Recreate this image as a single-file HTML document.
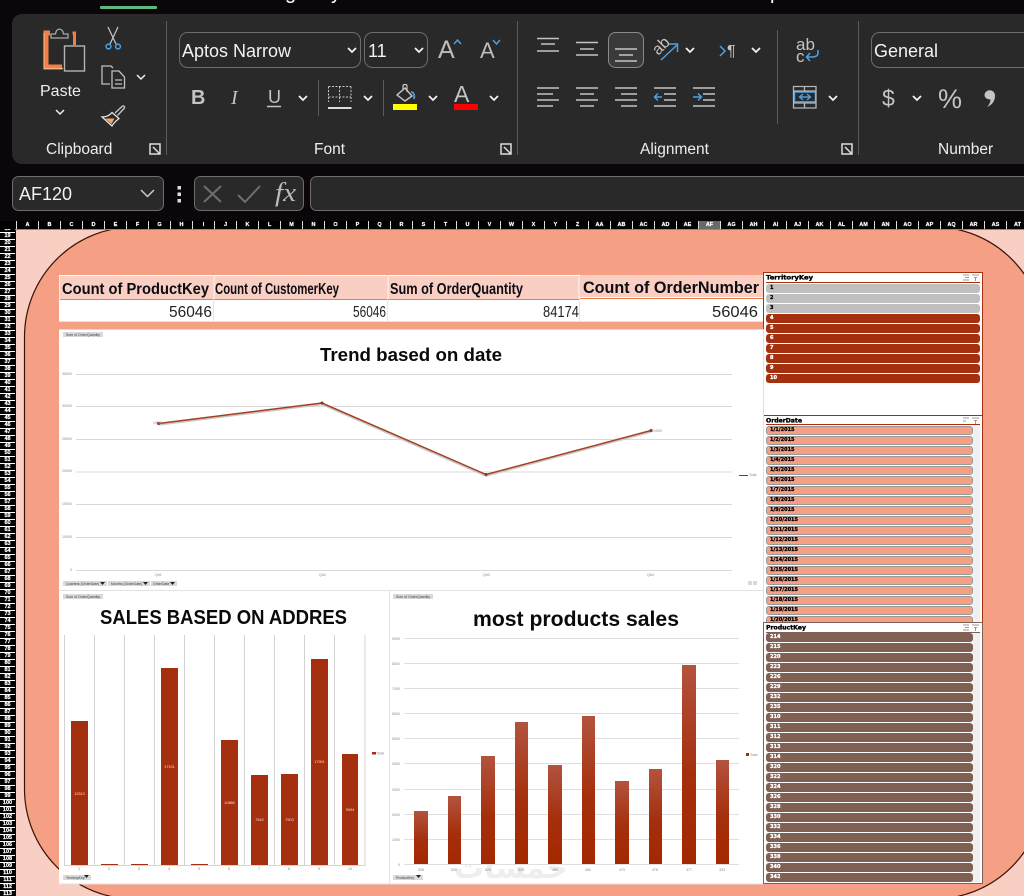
<!DOCTYPE html>
<html><head><meta charset="utf-8"><style>
*{box-sizing:border-box}
html,body{margin:0;padding:0;background:#0a060a}
#p{position:relative;width:1024px;height:896px;overflow:hidden;background:#0a060a;font-family:"Liberation Sans",sans-serif}
#s{position:absolute;left:0;top:0}
.sl{position:absolute;font:bold 5px/9px "DejaVu Sans",sans-serif;-webkit-text-stroke:.3px currentColor}
.sl div{height:9px;margin-bottom:1px;border-radius:3px;padding-left:4px;overflow:hidden}
.a div{background:#a5300f;color:#fff}
.g div{background:#bfbfbf;color:#000}
.o div{background:#f59f85;color:#000;border:1px solid #999;line-height:7px;padding-left:3px}
.b div{background:#7f6053;color:#fff}
#rows{position:absolute;left:0;top:226px;width:15px;height:670px;clip-path:inset(3px 0 0 0);background:repeating-linear-gradient(#000 0 6px,#fff 6px 7px);color:#fff;font:bold 5.5px/7px "Liberation Sans",sans-serif;text-align:center;white-space:pre;-webkit-text-stroke:.2px #fff}
#cols{position:absolute;left:16px;top:221px;height:8px;display:flex;color:#fff;font:bold 5.5px/8px "Liberation Sans",sans-serif;-webkit-text-stroke:.2px #fff}
#cols span{width:22px;text-align:center;border-left:1px solid #ddd;flex:none}
</style></head><body><div id="p">
<svg id="s" width="1024" height="896" viewBox="0 0 1024 896" xmlns="http://www.w3.org/2000/svg" font-family="'Liberation Sans',sans-serif">
<defs><linearGradient id="bar" x1="0" y1="0" x2="0" y2="1"><stop offset="0" stop-color="#b3533f"/><stop offset=".55" stop-color="#a52f0c"/><stop offset="1" stop-color="#a32800"/></linearGradient></defs>
<!-- top -->
<rect x="100" y="6" width="57" height="3" rx="1" fill="#5fb97f"/>
<text x="285" y="-1" font-size="20" fill="#fff">g</text><text x="331" y="-1" font-size="20" fill="#fff">y</text><text x="770" y="-1" font-size="20" fill="#fff">p</text>
<rect x="12" y="14" width="1040" height="150" rx="10" fill="#292929"/>
<g stroke="#5c5c5c" stroke-width="1"><path d="M166.500 21V155M517.500 21V155M858.500 21V155M777.500 30V124M318.500 80V116M383.500 80V116"/></g>
<!-- paste -->
<path d="M50 33H46V67H62" fill="none" stroke="#f08048" stroke-width="5"/><path d="M44 33V68.500H63" fill="none" stroke="#f6b27a" stroke-width="1.200"/>
<path d="M72.500 33H74.500V45" fill="none" stroke="#f08048" stroke-width="3"/>
<path d="M51 38V34H55.500C56 27.500 63 27.500 63.500 34H68V38Z" fill="#292929" stroke="#a8a8a8" stroke-width="1.300"/>
<rect x="64.500" y="46" width="20" height="25" fill="#292929" stroke="#b5b5b5" stroke-width="1.400"/>
<text x="40" y="96" font-size="16" fill="#eee">Paste</text>
<g fill="none" stroke="#eee" stroke-width="1.500"><path d="M56 110l4 4 4-4M137 75l4 4 4-4"/></g>
<!-- scissors -->
<path d="M108 27L116 44M118 27L110 44" stroke="#c8c8c8" stroke-width="1.200" fill="none"/><circle cx="108.500" cy="46.500" r="2.400" fill="none" stroke="#4d9fe0" stroke-width="1.500"/><circle cx="118" cy="46.500" r="2.400" fill="none" stroke="#4d9fe0" stroke-width="1.500"/>
<!-- copy -->
<path d="M110 84H102V66H111L113 68" fill="none" stroke="#c0c0c0" stroke-width="1.300"/><path d="M112 71H119L124.500 77V88H112Z" fill="#292929" stroke="#c0c0c0" stroke-width="1.300"/><path d="M115 80H122M115 84H122" stroke="#c0c0c0" stroke-width="1.300"/>
<!-- painter -->
<path d="M115 113L122 106.500C123.500 105 125.500 107 124 108.500L117.500 115.500" fill="none" stroke="#c8c8c8" stroke-width="1.300"/>
<path d="M102 117C107 117 110 115 112 112.500L119 118.500C116 121 113.500 123 112 126Z" fill="#292929" stroke="#eee" stroke-width="1.200"/>
<path d="M105 118.500L114.500 118.500L111.500 124Z" fill="#f6a55e"/>
<text x="46" y="154" font-size="15.500" fill="#eee">Clipboard</text>
<text x="314" y="154" font-size="15.500" fill="#eee">Font</text>
<text x="640" y="154" font-size="15.500" fill="#eee">Alignment</text>
<text x="938" y="154" font-size="15.500" fill="#eee">Number</text>
<g fill="none" stroke="#ddd" stroke-width="1.500"><path d="M150 144H160V154H150ZM153 147L160 154M156 154H160V150"/><path d="M501 144H511V154H501ZM504 147L511 154M507 154H511V150"/><path d="M842 144H852V154H842ZM845 147L852 154M848 154H852V150"/></g>
<!-- selects -->
<g fill="#292929" stroke="#6d6d6d"><rect x="179.500" y="32.500" width="181" height="35" rx="8"/><rect x="364.500" y="32.500" width="63" height="35" rx="8"/><rect x="871.500" y="32.500" width="200" height="35" rx="8"/><rect x="608.500" y="32.500" width="35" height="35" rx="7" fill="#3a3a3a" stroke="#8a8a8a"/></g>
<text x="182" y="57" font-size="18" fill="#f2f2f2">Aptos Narrow</text><text x="368" y="57" font-size="18" fill="#f2f2f2">11</text><text x="874" y="57" font-size="18" fill="#f2f2f2">General</text>
<g fill="none" stroke="#f2f2f2" stroke-width="1.800"><path d="M348 48l4 4 4-4M415 48l4 4 4-4M299 96l4 4 4-4M364 96l4 4 4-4M429 96l4 4 4-4M490 96l4 4 4-4M686 48l4 4 4-4M752 48l4 4 4-4M829 96l4 4 4-4M913 96l4 4 4-4"/></g>
<!-- font size -->
<text x="438" y="58" font-size="25" fill="#bdbdbd">A</text><text x="480" y="58" font-size="22" fill="#bdbdbd">A</text>
<path d="M454 44l3.500-4 3.500 4M493 40l3.500 4 3.500-4" fill="none" stroke="#4d9fe0" stroke-width="1.500"/>
<text x="191" y="104" font-size="20" font-weight="bold" fill="#c4c4c4">B</text>
<text x="231" y="104" font-size="20" font-style="italic" font-family="'Liberation Serif',serif" fill="#c4c4c4">I</text>
<text x="268" y="103" font-size="18" fill="#c4c4c4">U</text><path d="M267 106.500H281" stroke="#c4c4c4" stroke-width="1.500"/>
<!-- borders -->
<path d="M328.500 86.500H351M328.500 86.500V102M351 86.500V102M339.500 86.500V102M328.500 97H351" stroke="#c8c8c8" stroke-dasharray="2 1.500" fill="none"/><path d="M328 108H351.500" stroke="#ddd" stroke-width="2"/>
<!-- fill -->
<path d="M397 95L405 88L412 96L405 101Z" fill="none" stroke="#c8c8c8" stroke-width="1.400"/><path d="M403 90V86C403 84 407 84 407 86V92" fill="none" stroke="#c8c8c8" stroke-width="1.200"/><path d="M411 92C413 92 415 94 414 99" stroke="#4d9fe0" stroke-width="1.800" fill="none"/>
<rect x="393" y="104" width="24" height="6" fill="#ff0"/>
<text x="454" y="102" font-size="23" fill="#c4c4c4">A</text><rect x="454" y="104" width="24" height="6" fill="#f00"/>
<!-- alignment -->
<g stroke="#c4c4c4" stroke-width="1.500" fill="none"><path d="M537 38.500H559M541 44H555M537 51H559M576 42.500H598M580 49H594M576 55H598M615 49H637M619 55H633M615 61H637"/>
<path d="M537 88H559M537 94H553M537 100H559M537 106H553M576 88H598M580 94H594M576 100H598M580 106H594M615 88H637M621 94H637M615 100H637M621 106H637M654 88H676M664 94H676M664 100H676M654 106H676M693 88H715M703 94H715M703 100H715M693 106H715"/></g>
<g stroke="#4d9fe0" stroke-width="1.500" fill="none"><path d="M662 97H654.500M658 93.500L654.500 97L658 100.500M693 97H701M698 93.500L701.500 97L698 100.500M661 60L677 45M669 44H677.500V52M720 46L725 51L720 56"/>
<path d="M795 91.500H816M795 102H816M800 97H810M803 94L799.500 97L803 100M807 94L810.500 97L807 100" stroke-width="1.400"/><rect x="794.500" y="92" width="21" height="10"/>
<path d="M818 50V53C818 56 815 57 812 57H807M810 53L806.500 57L810 61" stroke-width="1.600"/></g>
<path d="M793.500 86.500H816V108H793.500ZM793.500 91H816M793.500 103H816M804.500 86.500V91M804.500 103V108" fill="none" stroke="#b5b5b5" stroke-width="1.300"/>
<text x="661" y="51" text-anchor="middle" font-size="16" fill="#c4c4c4" transform="rotate(-45 661 46)">ab</text>
<text x="727" y="56" font-size="16" fill="#c4c4c4">¶</text>
<text x="796" y="50" font-size="17" fill="#c4c4c4">ab</text><text x="796" y="62" font-size="17" fill="#c4c4c4">c</text>
<text x="882" y="106" font-size="23" fill="#c4c4c4">$</text><text x="938" y="108" font-size="27" fill="#c4c4c4">%</text>
<path d="M984.500 95a5 5 0 1 1 10.500 1c0 5-3 9-8 11c2-2 3.500-5 3.500-7.500c-3 0-6-1.500-6-4.500Z" fill="#c4c4c4"/>
<!-- formula bar -->
<g fill="#292929" stroke="#6d6d6d"><rect x="12.500" y="176.500" width="151" height="34" rx="6"/><rect x="194.500" y="176.500" width="109" height="34" rx="6"/><rect x="310.500" y="176.500" width="760" height="34" rx="6"/></g>
<text x="19" y="200" font-size="18" fill="#f2f2f2">AF120</text>
<path d="M141 190l6.500 6.500 6.500-6.500" fill="none" stroke="#ccc" stroke-width="1.500"/>
<rect x="177.500" y="186" width="3.500" height="3.500" fill="#ddd"/><rect x="177.500" y="192.500" width="3.500" height="3.500" fill="#ddd"/><rect x="177.500" y="199" width="3.500" height="3.500" fill="#ddd"/>
<path d="M204 186L221 202M221 186L204 202M238 195L245 202L260 186" fill="none" stroke="#6f6f6f" stroke-width="2"/>
<text x="275" y="201" font-size="26" font-style="italic" font-family="'Liberation Serif',serif" fill="#bbb" textLength="21" lengthAdjust="spacingAndGlyphs">fx</text>
<!-- sheet -->
<rect x="16" y="229" width="1008" height="667" fill="#f9cfc3"/>
<rect x="24.500" y="227" width="1019.500" height="672" rx="110" fill="#f59f85" stroke="#3a1208" stroke-width="1.200"/>
<rect x="0" y="221" width="1024" height="8" fill="#000"/>
<rect x="0" y="229" width="1024" height="1" fill="#8a8a8a"/>
<rect x="698" y="221" width="22" height="8" fill="#6a6a6a"/>
<!-- table -->
<rect x="59" y="275" width="704" height="47" fill="#fff"/>
<rect x="59.500" y="276" width="154" height="23" fill="#f9cfc3"/><rect x="214.500" y="276" width="173" height="23" fill="#f9cfc3"/><rect x="388.500" y="276" width="190" height="23" fill="#f9cfc3"/><rect x="580" y="275" width="183" height="22" fill="#f9cfc3"/>
<path d="M60 299.500H579M580 298.500H763" stroke="#ed7d47" stroke-width="1"/>
<path d="M213.500 275V322M387.500 275V322M579.500 274V322M59 321.500H763" stroke="#e4e4e4" stroke-width="1"/>
<g font-weight="bold" fill="#0c0c12"><text x="62" y="294" font-size="16" textLength="147" lengthAdjust="spacingAndGlyphs">Count of ProductKey</text>
<text x="215" y="294" font-size="16" textLength="124" lengthAdjust="spacingAndGlyphs">Count of CustomerKey</text>
<text x="390" y="294" font-size="16" textLength="133" lengthAdjust="spacingAndGlyphs">Sum of OrderQuantity</text>
<text x="583" y="293" font-size="16.500" textLength="176" lengthAdjust="spacingAndGlyphs">Count of OrderNumber</text></g>
<g fill="#222"><text x="169" y="317" font-size="16" textLength="43" lengthAdjust="spacingAndGlyphs">56046</text><text x="353" y="317" font-size="16" textLength="33" lengthAdjust="spacingAndGlyphs">56046</text><text x="543" y="317" font-size="16" textLength="36" lengthAdjust="spacingAndGlyphs">84174</text><text x="712" y="317" font-size="16" textLength="46" lengthAdjust="spacingAndGlyphs">56046</text></g>
<!-- chart 1 -->
<rect x="59" y="329.500" width="704" height="555" fill="#fff"/>
<g stroke="#d9d9d9" stroke-width="1"><path d="M76 374.500H732M76 406.500H732M76 439.500H732M76 472H732M76 504.500H732M76 537.500H732M76 570.500H732"/></g>
<polyline points="158.500,424.500 322,404 486,475.500 651,431.500" fill="none" stroke="#c8c8c8" stroke-width="2.500"/>
<polyline points="158.500,423.500 322,403 486,474.500 651,430.500" fill="none" stroke="#a5401f" stroke-width="1.500"/>
<g fill="#7a3a28"><circle cx="158.500" cy="423.500" r="1.500"/><circle cx="322" cy="403" r="1.500"/><circle cx="486" cy="474.500" r="1.500"/><circle cx="651" cy="430.500" r="1.500"/></g>
<g font-size="3.500" fill="#888"><text x="62" y="375">35000</text><text x="62" y="407">30000</text><text x="62" y="440">25000</text><text x="62" y="472">20000</text><text x="62" y="505">15000</text><text x="62" y="538">10000</text><text x="70" y="571">0</text>
<text x="155" y="576">Qtr1</text><text x="319" y="576">Qtr2</text><text x="483" y="576">Qtr3</text><text x="647" y="576">Qtr4</text><text x="749" y="476">Total</text><text x="153" y="424">19000</text><text x="652" y="432">21000</text></g>
<path d="M739 475.500H748" stroke="#a5300f" stroke-width="1"/>
<g fill="#d9d9d9"><rect x="63" y="332" width="40" height="5"/><rect x="63" y="581" width="44" height="5"/><rect x="108" y="581" width="42" height="5"/><rect x="151" y="581" width="26" height="5"/><rect x="748" y="581" width="4" height="4"/><rect x="753" y="581" width="4" height="4"/><rect x="63" y="594" width="40" height="5"/><rect x="393" y="594" width="40" height="5"/><rect x="63" y="875" width="28" height="5"/><rect x="393" y="875" width="30" height="5"/></g>
<g font-size="3.500" fill="#444"><text x="66" y="336">Sum of OrderQuantity</text><text x="66" y="585">Quarters (OrderDate)</text><text x="111" y="585">Months (OrderDate)</text><text x="153" y="585">OrderDate</text><text x="66" y="598">Sum of OrderQuantity</text><text x="396" y="598">Sum of OrderQuantity</text><text x="66" y="879">TerritoryKey</text><text x="396" y="879">ProductKey</text></g>
<path d="M100 582h5l-2.500 3zM143 582h5l-2.500 3zM170 582h5l-2.500 3zM84 875h5l-2.500 3zM416 875h5l-2.500 3z" fill="#222"/>
<path d="M59 590.500H763M389.500 590V884M59.500 884H763" stroke="#e2e2e2" stroke-width="1"/>
<!-- title -->
<text x="320" y="361" font-size="18" font-weight="bold" fill="#0a0a0a" textLength="182" lengthAdjust="spacingAndGlyphs">Trend based on date</text>
<text x="100" y="624" font-size="20.500" font-weight="bold" fill="#0a0a0a" textLength="247" lengthAdjust="spacingAndGlyphs">SALES BASED ON ADDRES</text>
<text x="473" y="626" font-size="21" font-weight="bold" fill="#0a0a0a" textLength="206" lengthAdjust="spacingAndGlyphs">most products sales</text>
<!-- chart 2 -->
<path d="M64.500 635V865M94.500 635V865M124.500 635V865M154.500 635V865M184.500 635V865M214.500 635V865M244.500 635V865M274.500 635V865M304.500 635V865M334.500 635V865M365 635V865M64 865.500H365.500" stroke="#d4d4d4" stroke-width="1"/>
<g fill="#a5300f"><rect x="71" y="721" width="17" height="144"/><rect x="101" y="864" width="17" height="1"/><rect x="131" y="864" width="17" height="1"/><rect x="161" y="668" width="17" height="197"/><rect x="191" y="864" width="17" height="1"/><rect x="221" y="740" width="17" height="125"/><rect x="251" y="775" width="17" height="90"/><rect x="281" y="774" width="17" height="91"/><rect x="311" y="659" width="17" height="206"/><rect x="342" y="754" width="16" height="111"/><rect x="372" y="752" width="4" height="2.500"/></g>
<g font-size="3.800" fill="#f5dcd4" text-anchor="middle"><text x="79.500" y="795">12513</text><text x="169.500" y="768">17191</text><text x="229.500" y="804">10886</text><text x="259.500" y="821">7842</text><text x="289.500" y="821">7903</text><text x="319.500" y="763">17901</text><text x="350" y="811">9094</text></g>
<g font-size="3.800" fill="#888" text-anchor="middle"><text x="79" y="870">1</text><text x="109" y="870">2</text><text x="139" y="870">3</text><text x="169" y="870">4</text><text x="199" y="870">5</text><text x="229" y="870">6</text><text x="259" y="870">7</text><text x="289" y="870">8</text><text x="319" y="870">9</text><text x="350" y="870">10</text><text x="380" y="754.500">Total</text></g>
<!-- chart 3 -->
<text x="511" y="878" text-anchor="middle" font-family="'DejaVu Sans',sans-serif" font-size="30" font-weight="bold" fill="#eeeeee" direction="rtl">خمسات</text>
<path d="M404 638.500H739M404 663.500H739M404 688.500H739M404 713.500H739M404 738.500H739M404 763.500H739M404 789.500H739M404 814.500H739M404 839.500H739M404 864.500H739" stroke="#dfdfdf" stroke-width="1"/>
<g fill="url(#bar)"><rect x="414" y="811" width="14" height="53"/><rect x="448" y="796" width="13" height="68"/><rect x="481" y="756" width="14" height="108"/><rect x="515" y="722" width="13" height="142"/><rect x="548" y="765" width="14" height="99"/><rect x="582" y="716" width="13" height="148"/><rect x="615" y="781" width="14" height="83"/><rect x="649" y="769" width="13" height="95"/><rect x="682" y="665" width="14" height="199"/><rect x="716" y="760" width="13" height="104"/></g>
<rect x="746" y="753" width="3" height="3" fill="#a5300f"/>
<g font-size="3.500" fill="#888"><text x="392" y="640">9000</text><text x="392" y="665">8000</text><text x="392" y="690">7000</text><text x="392" y="715">6000</text><text x="392" y="740">5000</text><text x="392" y="765">4000</text><text x="392" y="791">3000</text><text x="392" y="816">2000</text><text x="392" y="841">1000</text><text x="398" y="866">0</text><text x="750" y="756">Total</text></g>
<g font-size="3.500" fill="#888" text-anchor="middle"><text x="421" y="871">536</text><text x="454" y="871">530</text><text x="488" y="871">529</text><text x="521" y="871">528</text><text x="555" y="871">485</text><text x="588" y="871">480</text><text x="622" y="871">479</text><text x="655" y="871">478</text><text x="689" y="871">477</text><text x="722" y="871">333</text></g>
<!-- slicers -->
<rect x="763" y="272" width="219.500" height="611" fill="#fff"/>
<path d="M763.500 329V272.500H982.500V622" fill="none" stroke="#a5300f" stroke-width="1"/>
<path d="M763.500 329V622" stroke="#e0e0e0"/>
<path d="M766 282.500H980" stroke="#a5300f"/><path d="M764 415.500H982M766 424.500H980" stroke="#a5300f"/>
<rect x="973" y="425" width="7" height="197" fill="#f0f0f0"/><rect x="973" y="633" width="7" height="249" fill="#f0f0f0"/>
<path d="M763.500 622.500H982.500V883.500H763.500Z" fill="none" stroke="#7f6053"/><path d="M766 632.500H980" stroke="#7f6053"/>
<g font-family="'DejaVu Sans',sans-serif" font-size="6" font-weight="bold" fill="#000" stroke="#000" stroke-width=".35"><text x="766" y="279.500" textLength="47" lengthAdjust="spacingAndGlyphs">TerritoryKey</text><text x="766" y="422.500" textLength="36" lengthAdjust="spacingAndGlyphs">OrderDate</text><text x="766" y="629.500" textLength="40" lengthAdjust="spacingAndGlyphs">ProductKey</text></g>
<g stroke="#999" stroke-width="1" fill="none"><path d="M963 275H969M965 277.500H969M963 280H969M972 275H979M974 277.500H977M975.500 277V281M963 418H969M963 421H966M972 418H979M974 420.500H977M975.500 420V424M963 625H969M965 627.500H969M963 630H969M972 625H979M974 627.500H977M975.500 627V631"/></g>
</svg>
<div id="cols"><span>A</span><span>B</span><span>C</span><span>D</span><span>E</span><span>F</span><span>G</span><span>H</span><span>I</span><span>J</span><span>K</span><span>L</span><span>M</span><span>N</span><span>O</span><span>P</span><span>Q</span><span>R</span><span>S</span><span>T</span><span>U</span><span>V</span><span>W</span><span>X</span><span>Y</span><span>Z</span><span>AA</span><span>AB</span><span>AC</span><span>AD</span><span>AE</span><span>AF</span><span>AG</span><span>AH</span><span>AI</span><span>AJ</span><span>AK</span><span>AL</span><span>AM</span><span>AN</span><span>AO</span><span>AP</span><span>AQ</span><span>AR</span><span>AS</span><span>AT</span></div>
<div id="rows">18
19
20
21
22
23
24
25
26
27
28
29
30
31
32
33
34
35
36
37
38
39
40
41
42
43
44
45
46
47
48
49
50
51
52
53
54
55
56
57
58
59
60
61
62
63
64
65
66
67
68
69
70
71
72
73
74
75
76
77
78
79
80
81
82
83
84
85
86
87
88
89
90
91
92
93
94
95
96
97
98
99
100
101
102
103
104
105
106
107
108
109
110
111
112
113</div>
<div class="sl g" style="left:766px;top:284px;width:214px"><div>1</div><div>2</div><div>3</div></div>
<div class="sl a" style="left:766px;top:314px;width:214px"><div>4</div><div>5</div><div>6</div><div>7</div><div>8</div><div>9</div><div>10</div></div>
<div class="sl o" style="left:766px;top:426px;width:207px;height:196px;overflow:hidden"><div>1/1/2015</div><div>1/2/2015</div><div>1/3/2015</div><div>1/4/2015</div><div>1/5/2015</div><div>1/6/2015</div><div>1/7/2015</div><div>1/8/2015</div><div>1/9/2015</div><div>1/10/2015</div><div>1/11/2015</div><div>1/12/2015</div><div>1/13/2015</div><div>1/14/2015</div><div>1/15/2015</div><div>1/16/2015</div><div>1/17/2015</div><div>1/18/2015</div><div>1/19/2015</div><div>1/20/2015</div></div>
<div class="sl b" style="left:766px;top:633px;width:207px"><div>214</div><div>215</div><div>220</div><div>223</div><div>226</div><div>229</div><div>232</div><div>235</div><div>310</div><div>311</div><div>312</div><div>313</div><div>314</div><div>320</div><div>322</div><div>324</div><div>326</div><div>328</div><div>330</div><div>332</div><div>334</div><div>336</div><div>338</div><div>340</div><div>342</div></div>
</div></body></html>
